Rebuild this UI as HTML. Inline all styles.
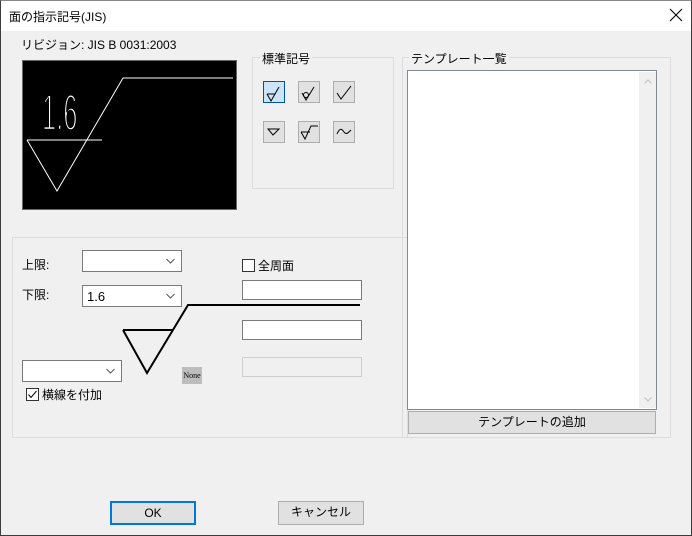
<!DOCTYPE html>
<html><head><meta charset="utf-8"><style>
*{box-sizing:border-box;margin:0;padding:0}
body{width:692px;height:536px;overflow:hidden;background:#f0f0f0;font-family:"Liberation Sans","Noto Sans CJK JP",sans-serif;font-size:12px;color:#000;position:relative}
.a{position:absolute}
.win{left:0;top:0;width:692px;height:536px;border:1px solid #3c3c3c;border-top-color:#888}
.title{left:1px;top:1px;width:690px;height:30px;background:#fff}
.grp{border:1px solid #dcdcdc}
.cb{background:#fff;border:1px solid #7a7a7a;height:22px}
.cb svg{position:absolute;right:6px;top:7px}
.tb{background:#fff;border:1px solid #7a7a7a;height:20px}
.ib{width:22px;height:22px;border:1px solid #adadad;background:#e1e1e1}
.btn{border:1px solid #adadad;background:#e1e1e1;text-align:center;line-height:21px}
</style></head><body>
<div class="a win"></div>
<div class="a title"></div>
<div class="a" style="left:9px;top:8px;font-size:12px">面の指示記号(JIS)</div>
<svg class="a" style="left:669px;top:8px" width="14" height="14"><path d="M1 1L13 13M13 1L1 13" stroke="#000" stroke-width="1.1"/></svg>
<div class="a" style="left:21px;top:36px">リビジョン: JIS B 0031:2003</div>
<svg class="a" style="left:22px;top:60px" width="215" height="150"><rect x="0.5" y="0.5" width="214" height="149" fill="#000" stroke="#666"/>
<path d="M5 80H80M5 80L35 131L101 18H211" stroke="#fff" fill="none"/>
<text transform="translate(20,70) scale(0.5,1)" fill="#fff" stroke="#000" stroke-width="2.4" font-size="51" font-family="Liberation Sans">1.6</text></svg>
<div class="a grp" style="left:252px;top:57px;width:142px;height:132px"></div>
<div class="a" style="left:260px;top:50px;background:#f0f0f0;padding:0 2px">標準記号</div>
<div class="a ib" style="left:263px;top:81px;border-color:#0054a6;background:#cce4f7"></div>
<svg class="a" style="left:263px;top:81px" width="22" height="22"><path d="M4 13H12M4 13L8 20L16 6" stroke="#000" fill="none"/></svg>
<div class="a ib" style="left:298px;top:81px"></div>
<svg class="a" style="left:298px;top:81px" width="22" height="22"><path d="M4 12L8 19L16 6" stroke="#000" fill="none"/><circle cx="8" cy="14" r="2.5" fill="none" stroke="#000"/></svg>
<div class="a ib" style="left:333px;top:81px"></div>
<svg class="a" style="left:333px;top:81px" width="22" height="22"><path d="M4 12L8 18L18 5" stroke="#000" fill="none"/></svg>
<div class="a ib" style="left:263px;top:121px"></div>
<svg class="a" style="left:263px;top:121px" width="22" height="22"><path d="M5 8H16L10 14Z" stroke="#000" fill="none"/></svg>
<div class="a ib" style="left:298px;top:121px"></div>
<svg class="a" style="left:298px;top:121px" width="22" height="22"><path d="M3 11H12M3 11L7 18L13 5H20" stroke="#000" fill="none"/></svg>
<div class="a ib" style="left:333px;top:121px"></div>
<svg class="a" style="left:333px;top:121px" width="22" height="22"><path d="M4 13C7 6 9 8 11 11S15 12 18 9" stroke="#000" fill="none"/></svg>
<div class="a grp" style="left:12px;top:237px;width:396px;height:201px"></div>
<div class="a" style="left:22px;top:256px">上限:</div>
<div class="a cb" style="left:82px;top:250px;width:100px"><svg width="9" height="6"><path d="M0.5 1L4.5 5L8.5 1" stroke="#555" fill="none"/></svg></div>
<div class="a" style="left:22px;top:286px">下限:</div>
<div class="a cb" style="left:82px;top:285px;width:100px"><div class="a" style="left:4px;top:3px;font-size:13px">1.6</div><svg width="9" height="6"><path d="M0.5 1L4.5 5L8.5 1" stroke="#555" fill="none"/></svg></div>
<div class="a" style="left:242px;top:259px;width:13px;height:13px;border:1px solid #333;background:#fff"></div>
<div class="a" style="left:258px;top:257px">全周面</div>
<div class="a tb" style="left:242px;top:280px;width:120px"></div>
<div class="a tb" style="left:242px;top:320px;width:120px"></div>
<div class="a" style="left:242px;top:357px;width:120px;height:20px;border:1px solid #ccc"></div>
<svg class="a" style="left:0;top:0" width="380" height="400"><path d="M123 330H173M123 330L147 373L188 305H360" stroke="#000" stroke-width="2" fill="none"/></svg>
<div class="a" style="left:182px;top:367px;width:20px;height:17px;background:#bdbdbd;font-size:8px;font-family:'Liberation Serif',serif;line-height:17px;text-align:center">None</div>
<div class="a cb" style="left:22px;top:360px;width:100px"><svg width="9" height="6"><path d="M0.5 1L4.5 5L8.5 1" stroke="#555" fill="none"/></svg></div>
<div class="a" style="left:26px;top:388px;width:13px;height:13px;border:1px solid #333;background:#fff"></div>
<svg class="a" style="left:26px;top:388px" width="13" height="13"><path d="M2.5 6.5L5 9.5L10.5 3" stroke="#000" fill="none"/></svg>
<div class="a" style="left:42px;top:386px">横線を付加</div>
<div class="a grp" style="left:402px;top:57px;width:269px;height:381px"></div>
<div class="a" style="left:409px;top:50px;background:#f0f0f0;padding:0 2px">テンプレート一覧</div>
<div class="a" style="left:407px;top:70px;width:250px;height:340px;background:#fff;border:1px solid #828790"></div>
<div class="a" style="left:639px;top:72px;width:17px;height:336px;background:#f0f0f0"></div>
<svg class="a" style="left:644px;top:79px" width="8" height="5"><path d="M0.5 4.5L4 1L7.5 4.5" stroke="#c0c0c0" fill="none"/></svg>
<svg class="a" style="left:644px;top:397px" width="8" height="5"><path d="M0.5 0.5L4 4L7.5 0.5" stroke="#c0c0c0" fill="none"/></svg>
<div class="a btn" style="left:408px;top:411px;width:248px;height:23px">テンプレートの追加</div>
<div class="a btn" style="left:110px;top:501px;width:86px;height:24px;border:2px solid #0078d7;line-height:20px">OK</div>
<div class="a btn" style="left:278px;top:501px;width:86px;height:24px">キャンセル</div>
</body></html>
